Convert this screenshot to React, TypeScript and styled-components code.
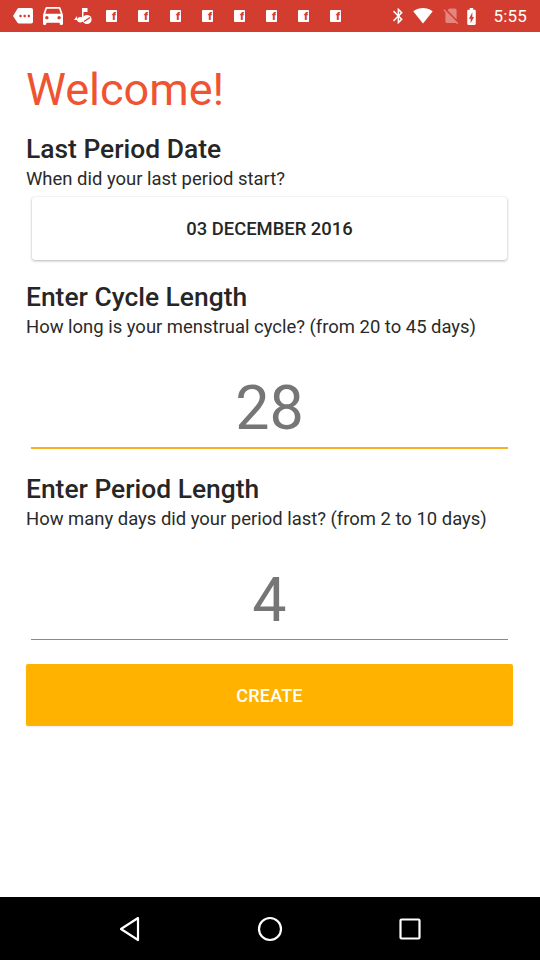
import React from "react";
import styled, { createGlobalStyle } from "styled-components";

const Global = createGlobalStyle`
  html, body { margin: 0; padding: 0; background: #ffffff; }
  body { font-family: Roboto, "Noto Sans", Arial, sans-serif; }
  * { box-sizing: border-box; }
`;

const Screen = styled.div`
  width: 540px;
  height: 960px;
  display: flex;
  flex-direction: column;
  background: #ffffff;
  overflow: hidden;
`;

const StatusBar = styled.div`
  height: 32px;
  flex: 0 0 32px;
  background: #d33d2f;
  display: flex;
  align-items: center;
  padding: 0 13px 0 13px;
  color: #ffffff;
`;

const LeftIcons = styled.div`
  display: flex;
  align-items: center;
  gap: 10px;
`;

const FbGroup = styled.div`
  display: flex;
  align-items: center;
  gap: 21px;
  margin-left: 3px;
`;

const FbSquare = styled.span`
  width: 11px;
  height: 12px;
  background: #ffffff;
  border-radius: 1px;
  display: flex;
  align-items: flex-end;
  justify-content: flex-end;
  padding-right: 1px;
  color: #d33d2f;
  font-family: Roboto, Arial, sans-serif;
  font-weight: 900;
  font-size: 11px;
  line-height: 11px;
  overflow: hidden;
`;

const RightIcons = styled.div`
  margin-left: auto;
  display: flex;
  align-items: center;
  gap: 8px;
`;

const Clock = styled.span`
  font-family: Roboto, Arial, sans-serif;
  font-size: 17px;
  color: #ffffff;
  margin-left: 9px;
  letter-spacing: 0.2px;
`;

const Content = styled.div`
  flex: 1;
  display: flex;
  flex-direction: column;
  padding: 32px 27px 0 26px;
`;

const Welcome = styled.h1`
  margin: 0;
  font-family: Roboto, Arial, sans-serif;
  font-weight: 400;
  font-size: 45px;
  line-height: 52px;
  color: #ee5431;
`;

const SectionTitle = styled.h2<{ $gap: number }>`
  margin: ${(p) => p.$gap}px 0 0 0;
  font-family: Roboto, Arial, sans-serif;
  font-weight: 500;
  font-size: 26.4px;
  line-height: 30px;
  color: #262626;
`;

const Hint = styled.p`
  margin: 4px 0 0 0;
  font-family: Roboto, Arial, sans-serif;
  font-weight: 400;
  font-size: 18.45px;
  line-height: 22px;
  color: #2a2a2a;
`;

const DateCard = styled.div`
  margin: 7px 6px 0 6px;
  height: 63px;
  background: #ffffff;
  border-radius: 3px;
  box-shadow: 0 1px 3px rgba(0, 0, 0, 0.28), 0 0 1px rgba(0, 0, 0, 0.12);
  display: flex;
  align-items: center;
  justify-content: center;
  font-family: Roboto, Arial, sans-serif;
  font-weight: 500;
  font-size: 18.4px;
  color: #262626;
`;

const NumberField = styled.div`
  margin-top: 35px;
  display: flex;
  flex-direction: column;
  align-items: stretch;
`;

const NumberValue = styled.div`
  text-align: center;
  font-family: Roboto, Arial, sans-serif;
  font-weight: 400;
  font-size: 61px;
  line-height: 70px;
  color: #767676;
`;

const Underline = styled.div<{ $focused?: boolean }>`
  margin: 4px 5px 0 5px;
  height: ${(p) => (p.$focused ? 2 : 1)}px;
  background: ${(p) => (p.$focused ? "#f6b026" : "#8a8a8a")};
`;

const CreateButton = styled.button`
  margin-top: 24px;
  height: 62px;
  border: none;
  border-radius: 2px;
  background: #ffb300;
  color: #ffffff;
  font-family: Roboto, Arial, sans-serif;
  font-weight: 500;
  font-size: 18px;
  letter-spacing: 0.2px;
  box-shadow: 0 1px 2px rgba(0, 0, 0, 0.08);
  cursor: pointer;
`;

const NavBar = styled.div`
  height: 63px;
  flex: 0 0 63px;
  background: #000000;
  display: flex;
  align-items: center;
  justify-content: space-around;
  padding: 0 60px;
`;

const NavSlot = styled.div`
  width: 120px;
  display: flex;
  justify-content: center;
  align-items: center;
`;

const TagIcon = () => (
  <svg width="20" height="16" viewBox="0 0 24 19" fill="#fff">
    <path d="M22 0H7c-.69 0-1.23.35-1.59.88L0 9.5l5.41 8.11c.36.53.9.89 1.59.89h15c1.1 0 2-.9 2-2V2c0-1.1-.9-2-2-2zM9 11c-.83 0-1.5-.67-1.5-1.5S8.17 8 9 8s1.5.67 1.5 1.5S9.83 11 9 11zm5 0c-.83 0-1.5-.67-1.5-1.5S13.17 8 14 8s1.5.67 1.5 1.5S14.83 11 14 11zm5 0c-.83 0-1.5-.67-1.5-1.5S18.17 8 19 8s1.5.67 1.5 1.5S19.83 11 19 11z" />
  </svg>
);

const CarIcon = () => (
  <svg width="20" height="18" viewBox="3 4 18 16" fill="#fff">
    <path d="M18.92 5.01C18.72 4.42 18.16 4 17.5 4h-11c-.66 0-1.21.42-1.42 1.01L3 11v8c0 .55.45 1 1 1h1c.55 0 1-.45 1-1v-1h12v1c0 .55.45 1 1 1h1c.55 0 1-.45 1-1v-8l-2.08-5.99zM6.5 15c-.83 0-1.5-.67-1.5-1.5S5.67 12 6.5 12s1.5.67 1.5 1.5S7.33 15 6.5 15zm11 0c-.83 0-1.5-.67-1.5-1.5s.67-1.5 1.5-1.5 1.5.67 1.5 1.5-.67 1.5-1.5 1.5zM5 10l1.5-4.5h11L19 10H5z" />
  </svg>
);

const MusicIcon = () => (
  <svg width="20" height="18" viewBox="0 0 20 18" fill="#fff">
    <path d="M9 1v9.3A3.2 3.2 0 0 0 7.3 10C5.5 10 4 11.2 4 12.8S5.5 15.5 7.3 15.5 10.5 14.3 10.5 12.7V5h4V1H9z" />
    <circle cx="14" cy="12.5" r="4.6" fill="#fff" />
    <path d="M11 14.5 L17 10.5" stroke="#d33d2f" strokeWidth="1.4" />
    <path d="M1 13 L4 9 L4 13 Z" />
  </svg>
);

const BluetoothIcon = () => (
  <svg width="10" height="16" viewBox="5 2 13 20" fill="#fff">
    <path d="M17.71 7.71L12 2h-1v7.59L6.41 5 5 6.41 10.59 12 5 17.59 6.41 19 11 14.41V22h1l5.71-5.71-4.3-4.29 4.3-4.29zM13 5.83l1.88 1.88L13 9.59V5.83zm1.88 10.46L13 18.17v-3.76l1.88 1.88z" />
  </svg>
);

const WifiIcon = () => (
  <svg width="24" height="16" viewBox="0 3 24 19" fill="#fff">
    <path d="M12.01 21.49L23.64 7c-.45-.34-4.93-4-11.64-4C5.28 3 .81 6.66.36 7l11.63 14.49.01.01.01-.01z" />
  </svg>
);

const NoSimIcon = () => (
  <svg width="16" height="17" viewBox="2 3 20 20" fill="rgba(255,255,255,0.38)">
    <path d="M18.99 5c0-1.1-.89-2-1.99-2h-7L7.66 5.34 19 16.68 18.99 5zM3.65 3.88L2.38 5.15 5 7.77V19c0 1.1.9 2 2 2h10.01c.35 0 .67-.1.96-.26l1.88 1.88 1.27-1.27L3.65 3.88z" />
  </svg>
);

const BatteryIcon = () => (
  <svg width="9" height="17" viewBox="7 2 10 20" fill="#fff">
    <path d="M15.67 4H14V2h-4v2H8.33C7.6 4 7 4.6 7 5.33v15.33C7 21.4 7.6 22 8.33 22h7.33c.74 0 1.34-.6 1.34-1.33V5.33C17 4.6 16.4 4 15.67 4zM11 20v-5.5H9L13 7v5.5h2L11 20z" />
  </svg>
);

const BackIcon = () => (
  <svg width="24" height="26" viewBox="0 0 24 26" fill="none" stroke="#fff" strokeWidth="2.2" strokeLinejoin="round">
    <path d="M20 2 L3 13 L20 24 Z" />
  </svg>
);

const HomeIcon = () => (
  <svg width="26" height="26" viewBox="0 0 26 26" fill="none" stroke="#fff" strokeWidth="2.2">
    <circle cx="13" cy="13" r="11" />
  </svg>
);

const RecentIcon = () => (
  <svg width="22" height="22" viewBox="0 0 22 22" fill="none" stroke="#fff" strokeWidth="2.2" strokeLinejoin="round">
    <rect x="1.5" y="1.5" width="19" height="19" rx="1" />
  </svg>
);

export default function App() {
  const fbCount = Array.from({ length: 8 });
  return (
    <>
      <Global />
      <Screen>
        <StatusBar>
          <LeftIcons>
            <TagIcon />
            <CarIcon />
            <MusicIcon />
            <FbGroup>
              {fbCount.map((_, i) => (
                <FbSquare key={i}>f</FbSquare>
              ))}
            </FbGroup>
          </LeftIcons>
          <RightIcons>
            <BluetoothIcon />
            <WifiIcon />
            <NoSimIcon />
            <BatteryIcon />
            <Clock>5:55</Clock>
          </RightIcons>
        </StatusBar>
        <Content>
          <Welcome>Welcome!</Welcome>
          <SectionTitle $gap={18}>Last Period Date</SectionTitle>
          <Hint>When did your last period start?</Hint>
          <DateCard>03 DECEMBER 2016</DateCard>
          <SectionTitle $gap={22}>Enter Cycle Length</SectionTitle>
          <Hint>How long is your menstrual cycle? (from 20 to 45 days)</Hint>
          <NumberField>
            <NumberValue>28</NumberValue>
            <Underline $focused />
          </NumberField>
          <SectionTitle $gap={25}>Enter Period Length</SectionTitle>
          <Hint>How many days did your period last? (from 2 to 10 days)</Hint>
          <NumberField>
            <NumberValue>4</NumberValue>
            <Underline />
          </NumberField>
          <CreateButton>CREATE</CreateButton>
        </Content>
        <NavBar>
          <NavSlot>
            <BackIcon />
          </NavSlot>
          <NavSlot>
            <HomeIcon />
          </NavSlot>
          <NavSlot>
            <RecentIcon />
          </NavSlot>
        </NavBar>
      </Screen>
    </>
  );
}
